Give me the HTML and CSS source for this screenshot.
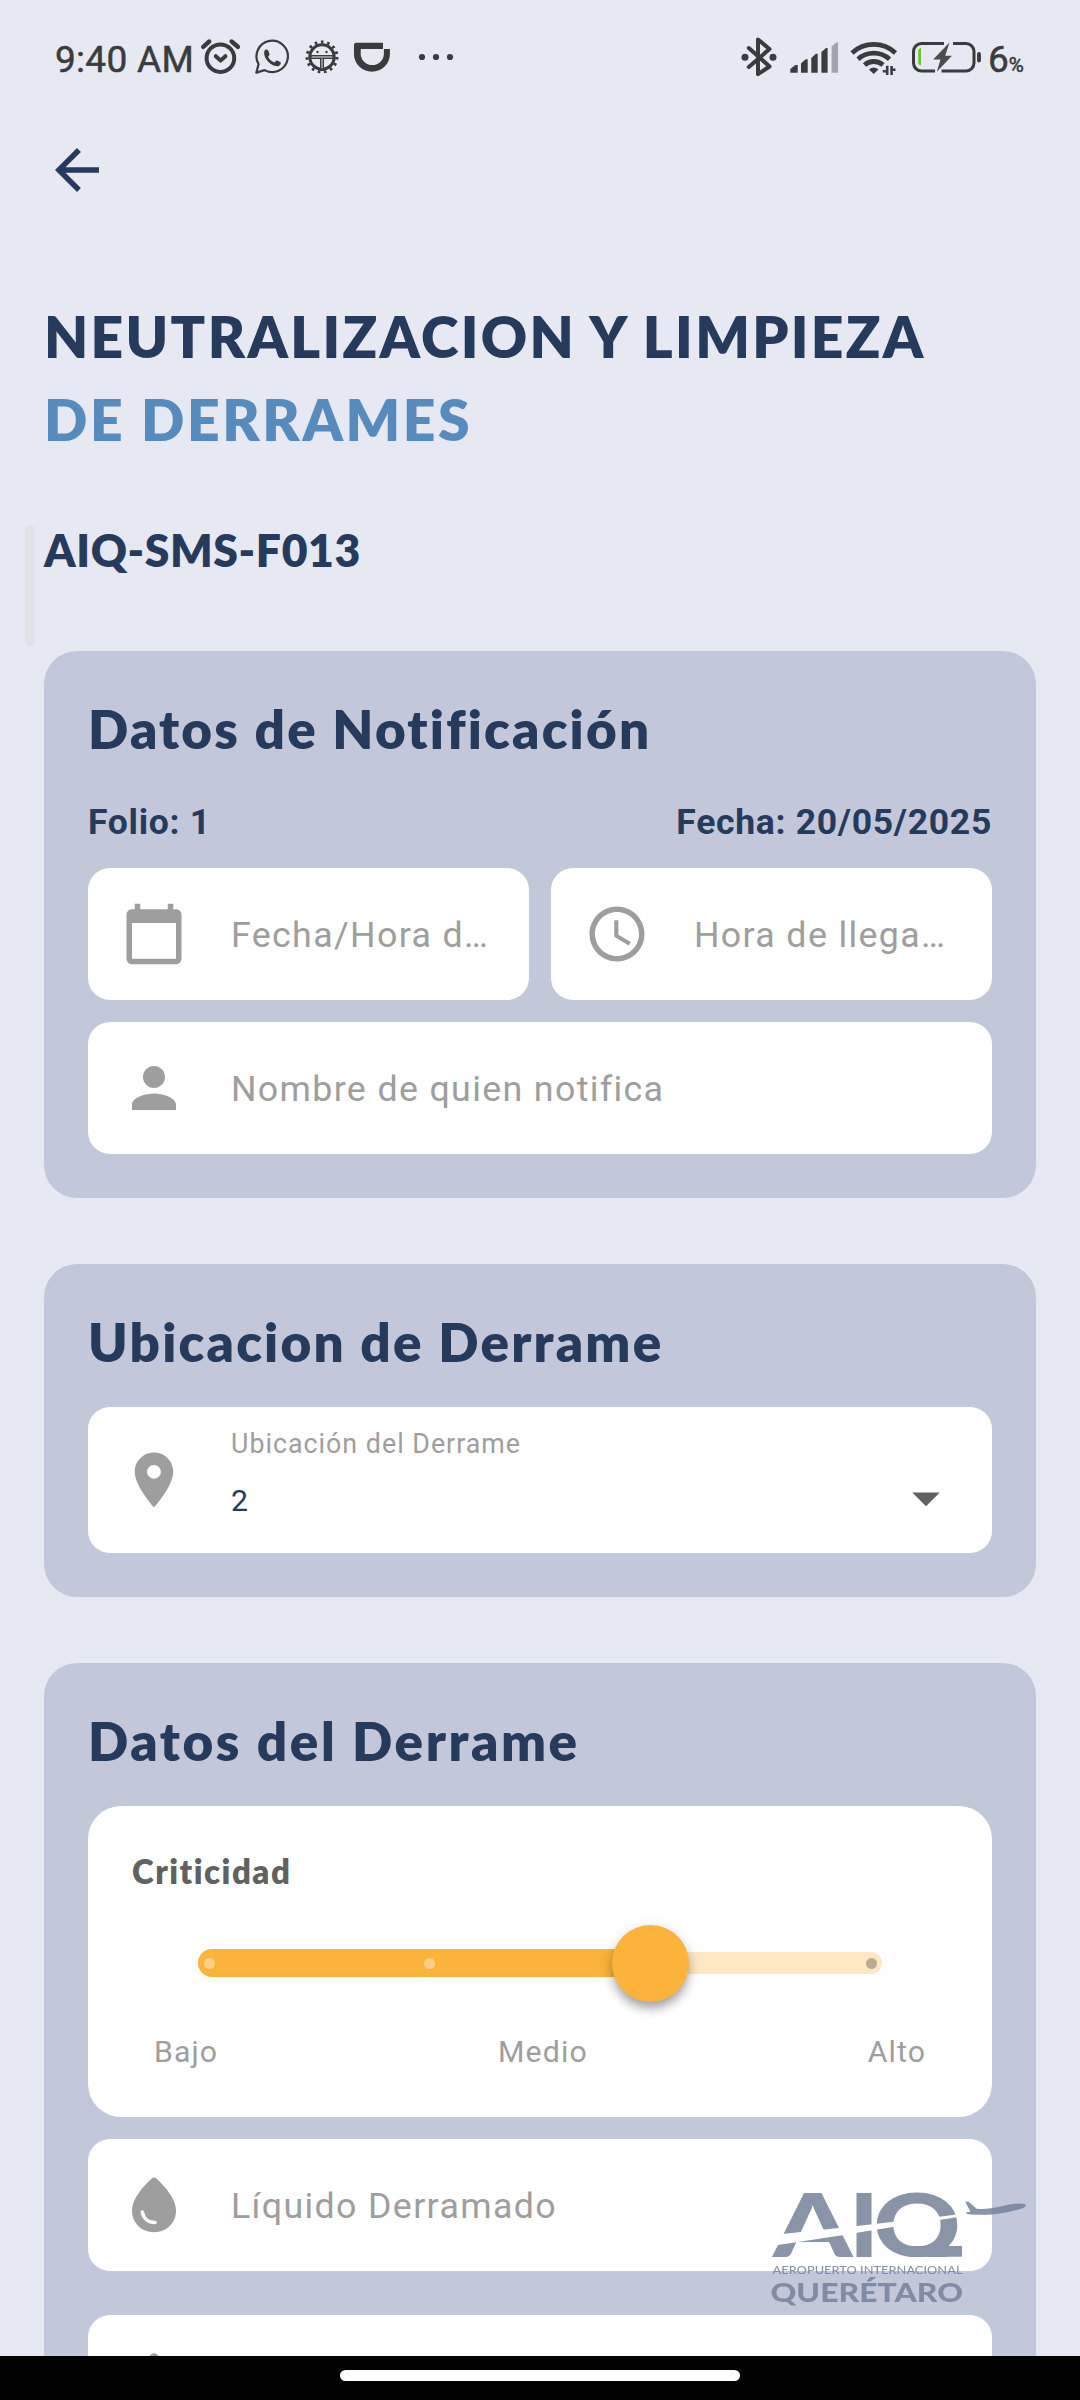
FILE: index.html
```html
<!DOCTYPE html>
<html lang="es">
<head>
<meta charset="utf-8">
<title>Neutralización y limpieza de derrames</title>
<link rel="stylesheet" href="styles.css">
</head>
<body>
<div class="screen">
  <header class="status">
    <span class="time">9:40 AM</span>
    <svg class="status-left" width="260" height="50" viewBox="200 33 260 50" fill="none" stroke="#3a3b3c" stroke-linecap="round" stroke-linejoin="round">
      <g stroke-width="4"><circle cx="220.4" cy="58.2" r="13.8"/><path d="M215.8 56.2l4.8 4.4 4.8-4.4"/><path d="M203.2 46.8l6-5.3M231.6 41.5l6.3 5.3" stroke-width="4.4"/></g>
      <path d="M256.3 72.6l2.3-8.4a15.7 15.7 0 1 1 6 5.900z" stroke-width="2.200"/>
      <path d="M264.4 50.8c1.5-2 3.3-1.4 4 .3l1.1 3c.3 1-.9 2.2-1.4 2.8 1.8 3 3.6 4.400 6.400 5.500.8-.8 1.600-2.300 2.800-1.900l3 1.600c1 .6.5 2.700-1.100 3.600-4.600 2.700-16.800-5.400-14.800-14.900z" fill="#3a3b3c" stroke="none"/>
      <circle cx="322" cy="57" r="12.200" stroke-width="3"/>
      <circle cx="322" cy="57" r="15" stroke-width="3" stroke-dasharray="2.600 3.684" stroke-linecap="butt"/>
      <path d="M311 59v-4h22v4z" fill="#3a3b3c" stroke="none"/><path d="M312 57h20" stroke="#e6e9f2" stroke-width="1.200"/>
      <path d="M322 59v12" stroke-width="4" stroke-linecap="butt"/><path d="M322 59v9" stroke="#e6e9f2" stroke-width="1"/>
      <circle cx="317.500" cy="52" r="1.200" fill="#3a3b3c" stroke="none"/><circle cx="326.500" cy="52" r="1.200" fill="#3a3b3c" stroke="none"/>
      <path d="M355.500 42.700H383v6.300h-22.300v4.500a11.600 11.600 0 0 0 23.200 0V49h6v5c0 10-8 17.700-17.900 17.700S354 64 354 54v-9.800z" fill="#3a3b3c" stroke="none"/>
      <g fill="#3a3b3c" stroke="none"><circle cx="422" cy="57" r="3.100"/><circle cx="436" cy="57" r="3.100"/><circle cx="450" cy="57" r="3.100"/></g>
    </svg>
    <svg class="status-right" width="250" height="50" viewBox="738 33 250 50" fill="none" stroke="#3a3b3c" stroke-linecap="round" stroke-linejoin="round">
      <path d="M748.800 48l20.700 18.500-11.500 7.700V39.500l11.500 9.500-20.700 18" stroke-width="4"/>
      <g fill="#3a3b3c" stroke="none"><circle cx="745" cy="57.300" r="3.500"/><circle cx="773" cy="57.300" r="3.500"/>
      <path d="M790.300 72.700V69l5-4h2.400v7.700zM801 72.700v-9.200l4.600-4.300h2.100v13.500zM811.300 72.700V58l4.600-4.200h1.800v18.900zM821.400 72.700V52l4.600-4h1.600v24.700z"/>
      <path d="M831.600 72.700V46.500l4.500-4h2v30.200z" fill="#a3a5ac"/></g>
      <g stroke-width="4.800" stroke-linecap="butt"><path d="M852 53a32 32 0 0 1 43.500 0"/><path d="M858 59.200a23.500 23.500 0 0 1 31.500 0"/><path d="M864.500 65a14 14 0 0 1 18.500 0"/></g>
      <path d="M869 69.500q4.700-4 9.400 0l-4.700 4.600z" fill="#3a3b3c" stroke="none"/>
      <path d="M887.200 65.800v9.200M882.800 71.200h3M891.600 66v9M892.500 69.800h3" stroke-width="2.600" stroke-linecap="butt"/>
      <path d="M935 71H921.500a8 8 0 0 1-8-8V51.500a8 8 0 0 1 8-8H944M953 43.500h13a8 8 0 0 1 8 8V63a8 8 0 0 1-8 8h-24.500" stroke-width="3" stroke-linecap="butt"/>
      <path d="M918.300 49.500l2.700-1.700v18l-2.700-1.700z" fill="#5fc92a" stroke="none"/>
      <path d="M949.500 42.500l-16.400 17h7.400l-3.700 12.200L952 55.700h-6.800z" fill="#4c4c4e" stroke="none"/>
      <path d="M979 54v6.500" stroke-width="3.800"/>
    </svg>
    <span class="battery">6<small>%</small></span>
  </header>

  <nav class="appbar">
    <svg class="icon back" viewBox="0 0 24 24"><path d="M20 11H7.830l5.590-5.590L12 4l-8 8 8 8 1.410-1.410L7.830 13H20v-2z"/></svg>
  </nav>

  <main>
    <h1><span class="t1">NEUTRALIZACION Y LIMPIEZA</span><span class="t2">DE DERRAMES</span></h1>
    <p class="code">AIQ-SMS-F013</p>

    <section class="card">
      <h2 class="w1">Datos de Notificación</h2>
      <div class="meta"><span class="folio">Folio: 1</span><span>Fecha: 20/05/2025</span></div>
      <div class="row">
        <div class="field">
          <svg class="icon" viewBox="0 0 24 24"><path d="M20 3h-1V1h-2v2H7V1H5v2H4c-1.100 0-2 .9-2 2v16c0 1.100.9 2 2 2h16c1.100 0 2-.9 2-2V5c0-1.100-.9-2-2-2zm0 18H4V8h16v13z"/></svg>
          <span>Fecha/Hora d…</span>
        </div>
        <div class="field">
          <svg class="icon" viewBox="0 0 24 24"><path d="M11.990 2C6.470 2 2 6.480 2 12s4.470 10 9.990 10C17.520 22 22 17.520 22 12S17.520 2 11.990 2zM12 20c-4.420 0-8-3.580-8-8s3.580-8 8-8 8 3.580 8 8-3.580 8-8 8zM12.500 7H11v6l5.250 3.150.75-1.230-4.500-2.670z"/></svg>
          <span>Hora de llega…</span>
        </div>
      </div>
      <div class="field">
        <svg class="icon" viewBox="0 0 24 24"><path d="M12 12c2.210 0 4-1.790 4-4s-1.790-4-4-4-4 1.790-4 4 1.790 4 4 4zm0 2c-2.670 0-8 1.340-8 4v2h16v-2c0-2.660-5.330-4-8-4z"/></svg>
        <span>Nombre de quien notifica</span>
      </div>
    </section>

    <section class="card">
      <h2 class="w2">Ubicacion de Derrame</h2>
      <div class="field select">
        <svg class="icon" viewBox="0 0 24 24"><path d="M12 2C8.130 2 5 5.130 5 9c0 5.250 7 13 7 13s7-7.750 7-13c0-3.870-3.130-7-7-7zm0 9.500c-1.380 0-2.500-1.120-2.500-2.500s1.120-2.500 2.500-2.500 2.500 1.120 2.500 2.500-1.120 2.500-2.500 2.500z"/></svg>
        <div class="stack"><span class="label">Ubicación del Derrame</span><span class="value">2</span></div>
        <svg class="icon caret" viewBox="0 0 24 24"><path d="M7 10l5 5 5-5z"/></svg>
      </div>
    </section>

    <section class="card">
      <h2 class="w3">Datos del Derrame</h2>
      <div class="panel">
        <h3>Criticidad</h3>
        <div class="slider">
          <div class="active"><i></i><i></i></div>
          <div class="rest"><i></i></div>
          <div class="thumb"></div>
        </div>
        <div class="scale"><span>Bajo</span><span>Medio</span><span>Alto</span></div>
      </div>
      <div class="field drop">
        <svg class="icon" viewBox="0 0 66 66"><path d="M33 5.500c1 0 1.600.4 2.300 1C44.500 15 55 27 55 38.500 55 51 45.500 60.200 33 60.200S11 51 11 38.500C11 27 21.500 15 30.700 6.500c.7-.6 1.300-1 2.300-1z"/><path d="M21.300 40c1.200 7 6.500 10.500 12.700 10.500" fill="none" stroke="#fff" stroke-width="3.600" stroke-linecap="round"/></svg>
        <span>Líquido Derramado</span>
      </div>
      <div class="field">
        <svg class="icon" viewBox="0 0 66 66"><path d="M33 5.300c2 0 3 .7 4 2.200l20 45c1 3-1 6-4 6H13c-3 0-5-3-4-6l20-45c1-1.500 2-2.200 4-2.200z"/></svg>
      </div>
    </section>
  </main>

  <div class="scrollbar"></div>

  <svg class="logo" width="260" height="116" viewBox="768 2190 260 116">
    <defs><mask id="cut" maskUnits="userSpaceOnUse" x="768" y="2180" width="260" height="77"><rect x="768" y="2180" width="260" height="77" fill="#fff"/><path d="M768 2235.500l68.300-7.200 36.400-4 20.700-2.600L937 2217l24-3v3l-6 .6-17 2.600-45 6.700-20.700 3.300-31.700 5.200L768 2246.500z" fill="#000"/></mask></defs>
    <g class="logo-ink">
      <g mask="url(#cut)" class="mark">
        <text x="773" y="2256.700" textLength="79.500" lengthAdjust="spacingAndGlyphs">A</text>
        <text x="849" y="2256.700" textLength="30" lengthAdjust="spacingAndGlyphs">I</text>
        <text x="873" y="2256.700" textLength="88" lengthAdjust="spacingAndGlyphs">Q</text>
        <path d="M912 2246h50v10.700h-50z"/>
      </g>
      <text class="sub" x="772.500" y="2274" textLength="190" lengthAdjust="spacingAndGlyphs">AEROPUERTO INTERNACIONAL</text>
      <text class="city" x="770.500" y="2302" textLength="192.500" lengthAdjust="spacingAndGlyphs">QUERÉTARO</text>
      <path d="M965.300 2201.800l3-.4 8.400 7.400q9 .9 19-1.200l14-3q10-1.900 14.500-.6 2.500 1 1.500 2.300-1.500 1.700-7 3.200-20 5-33 5.200-11 .3-19-.8l-.3-1.600 4-.6z"/>
    </g>
  </svg>

  <footer class="navbar"><div></div></footer>
</div>
</body>
</html>
```
FILE: styles.css
```css
* { box-sizing: border-box; margin: 0; padding: 0; }
body { background: #e6e9f2; font-family: Roboto, sans-serif; }
.screen { position: relative; width: 1080px; height: 2400px; overflow: hidden; display: flex; flex-direction: column; background: #e6e9f2; }

.status { height: 115px; padding: 33px 55px 0; display: flex; align-items: flex-start; color: #3a3b3c; flex: none; }
.time { width: 145px; font-size: 37px; line-height: 53px; white-space: nowrap; letter-spacing: 0.3px; -webkit-text-stroke: 0.5px; }
.status-left { flex: none; }
.status-right { flex: none; margin-left: 278px; }
.battery { font-size: 37px; line-height: 53px; white-space: nowrap; -webkit-text-stroke: 0.5px; }
.battery small { font-size: 20.500px; }

.icon { width: 66px; height: 66px; flex: none; fill: #9e9e9e; display: block; }
.appbar { height: 110px; padding: 22px 44px; flex: none; }
.back { fill: #263a5c; }

main { height: 2131px; padding: 70px 44px 0; flex: none; overflow: hidden; }
h1, h2, h3, .code { font-family: Lato, sans-serif; font-weight: 800; color: #263a5c; white-space: nowrap; }
h1 { font-size: 57px; line-height: 83px; letter-spacing: 2.320px; }
h1 span { display: block; }
.t2 { color: #588bbd; letter-spacing: 2.600px; }
.code { font-size: 44.500px; line-height: 60px; letter-spacing: 0.6px; margin-top: 59px; margin-bottom: 71px; }

.card { background: #c2c7da; border-radius: 33px; padding: 44px; margin-bottom: 66px; }
h2 { font-size: 53px; line-height: 68px; margin-bottom: 31px; }
.w1 { letter-spacing: 2.180px; }
.w2 { letter-spacing: 2.200px; }
.w3 { letter-spacing: 2.550px; }
.meta { display: flex; justify-content: space-between; margin-top: 37px; margin-bottom: 24px; color: #263a5c; font-weight: 700; font-size: 35.500px; line-height: 44px; letter-spacing: 0.7px; }
.row { display: grid; grid-template-columns: 1fr 1fr; gap: 22px; margin-bottom: 22px; }
.field { height: 132px; background: #fff; border-radius: 22px; padding: 0 33px; display: flex; align-items: center; gap: 44px; color: #9e9e9e; font-size: 35.750px; letter-spacing: 1.350px; white-space: nowrap; }
.field > span { padding-top: 2px; }
.select { height: 146px; }
.stack { flex: 1; display: flex; flex-direction: column; height: 146px; padding-top: 21px; }
.label { font-size: 26.800px; line-height: 32px; letter-spacing: 1px; }
.value { font-size: 30.250px; line-height: 40px; margin-top: 21px; color: #263a5c; }
.caret { fill: #616161; position: relative; top: 18px; }
.panel { height: 311px; background: #fff; border-radius: 33px; padding: 44px; margin-bottom: 22px; }
h3 { font-size: 33px; line-height: 42px; letter-spacing: 1.500px; }
.panel h3 { color: #616161; }
.slider { position: relative; height: 78px; margin: 32px 66px 0; display: flex; align-items: center; }
.slider i { width: 11px; height: 11px; border-radius: 50%; display: block; }
.active { height: 28px; width: 452px; background: #fbb33b; border-radius: 14px 0 0 14px; padding-left: 5.500px; display: flex; align-items: center; gap: 209.500px; }
.active i { background: #fdd08a; }
.rest { height: 22px; flex: 1; background: #fee7c3; border-radius: 0 11px 11px 0; display: flex; align-items: center; justify-content: flex-end; padding-right: 5.500px; }
.rest i { background: #bba992; }
.thumb { position: absolute; left: 414px; top: 1px; width: 77px; height: 77px; border-radius: 50%; background: #fbb33b; box-shadow: 0 8px 11px -2px rgba(0,0,0,.3), 0 3px 14px rgba(0,0,0,.16); }
.scale { display: flex; justify-content: space-between; padding: 0 22px; margin-top: 29px; font-size: 30.250px; line-height: 41px; letter-spacing: 1.100px; color: #9e9e9e; }
.drop { margin-bottom: 44px; }

.scrollbar { position: absolute; left: 25px; top: 525px; width: 10px; height: 122px; border-radius: 5px; background: #e1e2e7; }
.logo { position: absolute; left: 768px; top: 2190px; overflow: visible; }
.logo-ink { fill: #76839a; opacity: .86; font-family: Lato, sans-serif; }
.mark { font-size: 87.500px; font-weight: 900; }
.sub { font-size: 11.500px; font-weight: 500; }
.city { font-size: 26px; font-weight: 900; }

.navbar { height: 44px; background: #000; padding-top: 14px; flex: none; }
.navbar div { width: 400px; height: 11px; border-radius: 6px; background: #fff; margin: 0 auto; }
```
